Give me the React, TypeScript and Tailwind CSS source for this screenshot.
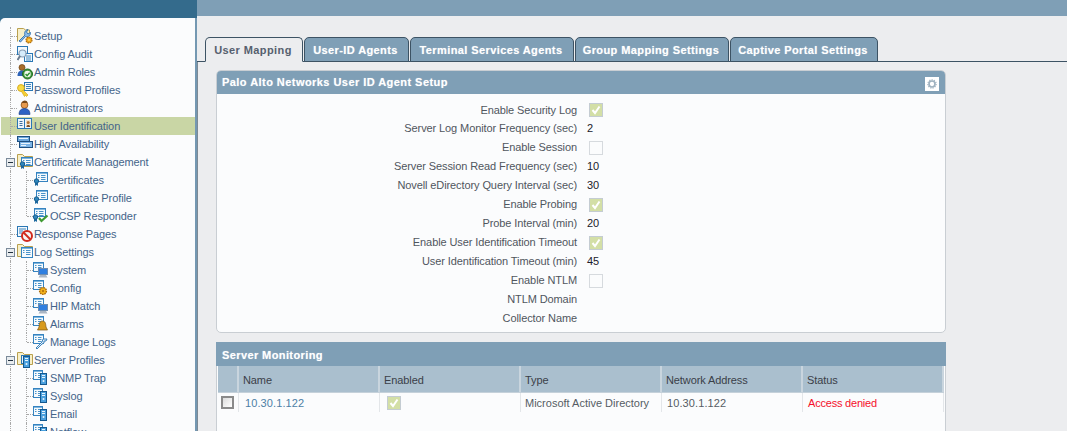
import React from "react";

const Doc = ({ x = 0, y = 0, w = 11, h = 10 }: any) => (
  <g>
    <rect x={x + 0.5} y={y + 0.5} width={w} height={h} fill="#f6fafd" stroke="#3583c0" />
    <rect x={x + 1} y={y + 1} width={w - 1} height={1} fill="#7fb6de" />
    <path d={`M${x + 5} ${y + 3.5}h${w - 6.5}M${x + 5} ${y + 5.5}h${w - 6.5}M${x + 5} ${y + 7.5}h${w - 6.5}M${x + 2} ${y + 3.5}h1.5M${x + 2} ${y + 5.5}h1.5`} stroke="#4a93c9" />
  </g>
);
const Folder = () => <path d="M0.5 0.5h5l2 2h8v10h-15z" fill="#f7efc8" stroke="#b9a04e" />;
const Ribbon = ({ x = 3, y = 11 }: any) => (
  <g>
    <path d={`M${x - 1.5} ${y}v5l1.5-1 1.5 1v-5z`} fill="#1f6aa0" />
    <circle cx={x} cy={y} r={2.2} fill="#2f86bb" stroke="#1b5f90" />
  </g>
);
const Server = ({ x = 6, y = 4 }: any) => (
  <g>
    <rect x={x + 0.5} y={y + 0.5} width={6} height={11} fill="#4aa0de" stroke="#14598f" />
    <rect x={x + 2} y={y + 2} width={3} height={1} fill="#e8f4fc" />
    <rect x={x + 2} y={y + 4} width={3} height={1} fill="#e8f4fc" />
    <circle cx={x + 3.5} cy={y + 8} r={1} fill="#e8f4fc" />
  </g>
);
const Monitor = () => (
  <g>
    <rect x="5.5" y="6.5" width="9" height="6" fill="#2f7fe0" stroke="#6d8db0" />
    <path d="M7 13h6l1.5 2.5h-9z" fill="#aab6c4" />
  </g>
);

const icons: Record<string, React.ReactNode> = {
  setup: (
    <>
      <path d="M0.5 13.5v-13h6l2 1.5h4v3" fill="#f7efc8" stroke="#b9a04e" />
      <path d="M2 13l6-6c-1-2 0-5 3-5.5l-1.5 2.5 1.5 2 2.5-1.5c.3 3-2.5 5-5 4l-5 5.5z" fill="#8dbcea" stroke="#2d6fae" strokeWidth="0.9" />
      <circle cx="12" cy="12" r="3" fill="#f0a81c" stroke="#a8690d" strokeWidth="1.2" strokeDasharray="1.6 0.7" />
      <circle cx="12" cy="12" r="1" fill="#f9d776" />
    </>
  ),
  audit: (
    <>
      <rect x="0.5" y="0.5" width="10" height="8" fill="#f2f8fd" stroke="#2a77b4" />
      <rect x="7.5" y="7.5" width="8" height="8" fill="#f2f8fd" stroke="#2a77b4" />
      <path d="M9 10h5M9 12h5M9 14h5" stroke="#3f86bd" />
      <circle cx="5.5" cy="7.5" r="3.5" fill="#d6ecfb" stroke="#8a9fb5" strokeWidth="1.2" />
      <path d="M3 10l-2.5 4" stroke="#6b7c8e" strokeWidth="2" />
    </>
  ),
  roles: (
    <>
      <circle cx="5" cy="3.5" r="3" fill="#a86d2a" stroke="#6d4212" strokeWidth="0.7" />
      <path d="M0.5 12c0-4 2-5.5 4.5-5.5 2 0 3 1 3.5 3v2.5z" fill="#2d63b8" />
      <circle cx="10.5" cy="10" r="5" fill="#3f9a3c" stroke="#1f6620" />
      <circle cx="10.5" cy="10" r="3.2" fill="#f2f7ee" />
      <path d="M8.6 10l1.5 1.7 2.6-3" stroke="#2b8f2f" strokeWidth="1.4" fill="none" />
    </>
  ),
  key: (
    <>
      <rect x="7.5" y="0.5" width="8" height="8" fill="#f2f8fd" stroke="#2a77b4" />
      <path d="M9 2.5h5M9 4.5h5M9 6.5h5" stroke="#3f86bd" />
      <circle cx="4" cy="6" r="3.4" fill="#f7db45" stroke="#d6ab20" />
      <path d="M6 8l5 5-1.5 1.5-1-1-1 1-3-5z" fill="#f4cf35" stroke="#d6ab20" strokeWidth="0.7" />
    </>
  ),
  admin: (
    <>
      <circle cx="7.5" cy="5" r="3.4" fill="#e79a4e" stroke="#8a4f16" strokeWidth="0.8" />
      <path d="M4.5 3c1-3 5.5-3.5 6 0z" fill="#7a4a1a" />
      <path d="M2 14.5c0-4 2-6 5.5-6s5.5 2 5.5 6z" fill="#2c62c4" stroke="#1c3f86" strokeWidth="0.6" />
    </>
  ),
  userid: (
    <>
      <rect x="0.5" y="0.5" width="14" height="10" fill="#eef5fb" stroke="#2a77b4" />
      <path d="M7.5 1v9" stroke="#2a77b4" />
      <path d="M2.5 3.5h3M2.5 5.5h3M2.5 7.5h3" stroke="#3f6f9e" />
      <rect x="9" y="2" width="4.5" height="7" fill="#efe0c8" />
      <circle cx="11.2" cy="4.5" r="1.5" fill="#b0753a" />
      <path d="M9.5 9c0-2.6 3.6-2.6 3.6 0z" fill="#7c4d24" />
    </>
  ),
  ha: (
    <>
      <rect x="0.5" y="0.5" width="12" height="5" fill="#6ba7dd" stroke="#1d4f80" />
      <rect x="2.5" y="5.5" width="13" height="6" fill="#7cb4e6" stroke="#1d4f80" />
      <path d="M4 7.5h9M4 9.5h5" stroke="#e9f4fd" />
      <path d="M2 2.5h9" stroke="#e9f4fd" />
    </>
  ),
  certFolder: (
    <>
      <Folder />
      <g transform="translate(4,3)">
        <Doc w={11} h={8} />
        <Ribbon x={1.5} y={7} />
      </g>
    </>
  ),
  cert: (
    <>
      <g transform="translate(3,0)">
        <Doc w={11} h={9} />
      </g>
      <Ribbon x={3.5} y={9} />
    </>
  ),
  ocsp: (
    <>
      <g transform="translate(1,0)">
        <Doc w={11} h={8} />
      </g>
      <Ribbon x={2.5} y={9} />
      <path d="M6 10l2.5 3 6-5.5" stroke="#3f9a32" strokeWidth="2.2" fill="none" />
    </>
  ),
  response: (
    <>
      <rect x="0.5" y="0.5" width="10" height="10" fill="#f2f8fd" stroke="#2a77b4" />
      <path d="M2 3h7M2 5h4M2 7h3" stroke="#3f86bd" />
      <circle cx="10" cy="10" r="5" fill="#f6f6f6" stroke="#d12b1e" strokeWidth="2" />
      <path d="M6.5 6.5l7 7" stroke="#d12b1e" strokeWidth="2" />
    </>
  ),
  logFolder: (
    <>
      <Folder />
      <g transform="translate(4,3)">
        <Doc w={11} h={10} />
      </g>
    </>
  ),
  system: (
    <>
      <Doc w={10} h={9} />
      <Monitor />
    </>
  ),
  config: (
    <>
      <Doc w={10} h={9} />
      <circle cx="10" cy="11" r="3.4" fill="#f2b21d" stroke="#a8690d" strokeWidth="1.4" strokeDasharray="1.5 0.8" />
      <circle cx="10" cy="11" r="1" fill="#a8690d" />
    </>
  ),
  alarm: (
    <>
      <Doc w={10} h={9} />
      <path d="M9.5 5c3 0 3.2 3 3.5 6l1.5 3h-10l1.5-3c.3-3 .5-6 3.5-6z" fill="#d89a1c" stroke="#7d5510" strokeWidth="0.7" />
    </>
  ),
  manage: (
    <>
      <Doc w={10} h={9} />
      <path d="M3 14l6-6 1-3 4 0-1 2-2 0 0 2-2 1-5 5z" fill="#e6f1fa" stroke="#2a77b4" strokeWidth="0.9" />
    </>
  ),
  serverFolder: (
    <>
      <Folder />
      <rect x="4.5" y="3.5" width="8" height="8" fill="#e6f1fa" stroke="#2a77b4" />
      <Server x={6} y={4} />
    </>
  ),
  server: (
    <>
      <Doc w={9} h={9} />
      <Server x={7} y={3} />
    </>
  ),
};

type Row = { label: string; icon: string; level: 0 | 1; exp?: boolean; sel?: boolean; last?: boolean };
const rows: Row[] = [
  { label: "Setup", icon: "setup", level: 0 },
  { label: "Config Audit", icon: "audit", level: 0 },
  { label: "Admin Roles", icon: "roles", level: 0 },
  { label: "Password Profiles", icon: "key", level: 0 },
  { label: "Administrators", icon: "admin", level: 0 },
  { label: "User Identification", icon: "userid", level: 0, sel: true },
  { label: "High Availability", icon: "ha", level: 0 },
  { label: "Certificate Management", icon: "certFolder", level: 0, exp: true },
  { label: "Certificates", icon: "cert", level: 1 },
  { label: "Certificate Profile", icon: "cert", level: 1 },
  { label: "OCSP Responder", icon: "ocsp", level: 1, last: true },
  { label: "Response Pages", icon: "response", level: 0 },
  { label: "Log Settings", icon: "logFolder", level: 0, exp: true },
  { label: "System", icon: "system", level: 1 },
  { label: "Config", icon: "config", level: 1 },
  { label: "HIP Match", icon: "system", level: 1 },
  { label: "Alarms", icon: "alarm", level: 1 },
  { label: "Manage Logs", icon: "manage", level: 1, last: true },
  { label: "Server Profiles", icon: "serverFolder", level: 0, exp: true },
  { label: "SNMP Trap", icon: "server", level: 1 },
  { label: "Syslog", icon: "server", level: 1 },
  { label: "Email", icon: "server", level: 1 },
  { label: "Netflow", icon: "server", level: 1 },
];

const Check = ({ on }: { on: boolean }) => (
  <span className={`flex h-[14px] w-[14px] items-center justify-center border ${on ? "border-[#c4ccd2] bg-[#d3dfa6]" : "border-[#d6dade] bg-[#fbfcfd]"}`}>
    {on && (
      <svg width="12" height="12" viewBox="0 0 12 12">
        <path d="M2.5 6l2.5 3 4.5-6.5" stroke="#ffffff" strokeWidth="2" fill="none" />
      </svg>
    )}
  </span>
);

const TreeRow = ({ r }: { r: Row }) => (
  <div className={`relative flex h-[18px] items-center ${r.sel ? "bg-[#c9d6a5]" : ""} ${r.level === 0 ? "pl-[16px]" : "pl-[32px]"}`}>
    <span className="absolute left-[9px] top-0 h-[18px] border-l border-dotted border-[#a8a8a8]" />
    {r.level === 1 && (
      <>
        <span className={`absolute left-[25px] top-0 border-l border-dotted border-[#a8a8a8] ${r.last ? "h-[9px]" : "h-[18px]"}`} />
        <span className="absolute left-[26px] top-[9px] w-[6px] border-t border-dotted border-[#a8a8a8]" />
      </>
    )}
    {r.level === 0 && !r.exp && <span className="absolute left-[10px] top-[9px] w-[6px] border-t border-dotted border-[#a8a8a8]" />}
    {r.exp && (
      <span className="absolute left-[5px] top-[5px] flex h-[9px] w-[9px] items-center justify-center border border-[#7a8a9a] bg-[#e8ecef]">
        <span className="h-px w-[5px] bg-[#20303f]" />
      </span>
    )}
    <svg width="16" height="16" viewBox="0 0 16 16" className="shrink-0">
      {icons[r.icon]}
    </svg>
    <span className="ml-px whitespace-nowrap text-[11px] leading-none tracking-[-0.1px] text-[#44648a]">{r.label}</span>
  </div>
);

const tabs = [
  { label: "User Mapping", w: "w-[98px]", active: true },
  { label: "User-ID Agents", w: "w-[105px]" },
  { label: "Terminal Services Agents", w: "w-[164px]" },
  { label: "Group Mapping Settings", w: "w-[154px]" },
  { label: "Captive Portal Settings", w: "w-[148px]" },
];

const form: { l: string; v?: string; c?: boolean; h?: string }[] = [
  { l: "Enable Security Log", c: true, h: "h-[18px]" },
  { l: "Server Log Monitor Frequency (sec)", v: "2" },
  { l: "Enable Session", c: false },
  { l: "Server Session Read Frequency (sec)", v: "10" },
  { l: "Novell eDirectory Query Interval (sec)", v: "30" },
  { l: "Enable Probing", c: true },
  { l: "Probe Interval (min)", v: "20" },
  { l: "Enable User Identification Timeout", c: true },
  { l: "User Identification Timeout (min)", v: "45" },
  { l: "Enable NTLM", c: false },
  { l: "NTLM Domain", v: "" },
  { l: "Collector Name", v: "" },
];

const cols = [
  { w: "w-[21px]", t: "" },
  { w: "w-[141px]", t: "Name" },
  { w: "w-[141px]", t: "Enabled" },
  { w: "w-[141px]", t: "Type" },
  { w: "w-[141px]", t: "Network Address" },
  { w: "w-[141px]", t: "Status" },
];

export default function App() {
  return (
    <div className="h-[433px] w-[1067px] bg-white">
      <div
        className="flex h-[431px] w-[1067px] overflow-hidden bg-[#ecedef] text-[11px] tracking-[-0.1px] text-[#4a5058]"
        style={{ fontFamily: '"Liberation Sans", Arial, sans-serif' }}
      >
        <aside className="flex h-full w-[197px] shrink-0 flex-col bg-[#346b8c]">
          <div className="h-[18px] shrink-0" />
          <div className="flex-1 overflow-hidden rounded-tl-[5px] border-r-2 border-[#7498b2] bg-[#fbfcfd] pl-px pt-[9px]">
            {rows.map((r) => (
              <TreeRow key={r.label + r.icon + r.level} r={r} />
            ))}
          </div>
        </aside>
        <main className="flex min-w-0 flex-1 flex-col">
          <div className="h-[16px] shrink-0 bg-[#7f9fb6]" />
          <div className="flex h-[46px] shrink-0 items-end border-b border-[#3d5364] pl-[8px] pt-[21px]">
            {tabs.map((t) => (
              <div
                key={t.label}
                className={`-mb-px flex h-[25px] items-center justify-center rounded-t-[5px] border border-[#3d5364] pr-[2px] pt-px font-bold tracking-[0.4px] ${t.w} ${
                  t.active
                    ? "border-b-[#ecedef] bg-[#ecedef] text-[#56606e]"
                    : "ml-px bg-[#7f9fb6] text-white [text-shadow:0_0_1px_rgba(255,255,255,0.5)]"
                }`}
              >
                {t.label}
              </div>
            ))}
          </div>
          <div className="flex flex-1 flex-col border-l border-[#7d8a95] pl-[18px] pt-[8px]">
            <section className="h-[263px] w-[730px] shrink-0 overflow-hidden rounded-[5px] border border-[#c9ced3] bg-[#fbfcfd]">
              <div className="-mx-px -mt-px flex h-[24px] items-center justify-between rounded-t-[5px] bg-[#7f9fb6] pl-[6px] pr-[7px]">
                <span className="pt-px font-bold tracking-[0.45px] text-white [text-shadow:0_0_1px_rgba(255,255,255,0.5)]">
                  Palo Alto Networks User ID Agent Setup
                </span>
                <span className="mt-[3px] flex h-[14px] w-[14px] items-center justify-center bg-white">
                  <svg width="10" height="10" viewBox="0 0 12 12">
                    <circle cx="6" cy="6" r="3.6" fill="none" stroke="#9fb2c0" strokeWidth="2" />
                    <circle cx="6" cy="6" r="5" fill="none" stroke="#9fb2c0" strokeWidth="1.4" strokeDasharray="1.4 1.4" />
                  </svg>
                </span>
              </div>
              <div className="pt-[7px]">
                {form.map((f) => (
                  <div key={f.l} className={`flex items-center ${f.h ?? "h-[19px]"}`}>
                    <span className="w-[360px] text-right leading-none text-[#50565e]">{f.l}</span>
                    <span className="ml-[10px] flex items-center text-[#20202a]">
                      {f.c !== undefined ? <span className="ml-[2px]"><Check on={f.c} /></span> : f.v}
                    </span>
                  </div>
                ))}
              </div>
            </section>
            <section className="mt-[9px] flex min-h-0 w-[730px] flex-1 flex-col border-x border-[#c9ced3] bg-[#fbfcfd]">
              <div className="-mx-px flex h-[24px] shrink-0 items-center bg-[#7f9fb6] pl-[6px]">
                <span className="pt-[2px] font-bold tracking-[0.4px] text-white [text-shadow:0_0_1px_rgba(255,255,255,0.5)]">
                  Server Monitoring
                </span>
              </div>
              <div className="ml-px flex h-[27px] w-[726px] shrink-0 border-b border-[#c5d1da] bg-[#aabfce]">
                {cols.map((c) => (
                  <div key={c.t} className={`flex items-center border-r-2 border-[#c9d5de] pl-[4px] pt-[3px] text-[#3a4048] ${c.w}`}>
                    {c.t}
                  </div>
                ))}
              </div>
              <div className="ml-px flex h-[19px] w-[726px] shrink-0">
                <div className="flex w-[21px] items-center justify-center border-r border-[#e3e6e9] pr-px">
                  <span className="block h-[13px] w-[13px] border-2 border-[#8a8a8a] bg-gradient-to-br from-[#dcdcdc] to-white" />
                </div>
                <div className="flex w-[141px] items-center border-r border-[#e3e6e9] pl-[6px] pt-[2px] tracking-[0.1px] text-[#4d7fa6]">10.30.1.122</div>
                <div className="flex w-[141px] items-center border-r border-[#e3e6e9] pl-[7px]">
                  <Check on />
                </div>
                <div className="flex w-[141px] items-center border-r border-[#e3e6e9] pl-[4px] pt-[2px] tracking-normal text-[#565c64]">Microsoft Active Directory</div>
                <div className="flex w-[141px] items-center border-r border-[#e3e6e9] pl-[5px] pt-[2px] tracking-[0.1px] text-[#565c64]">10.30.1.122</div>
                <div className="flex w-[141px] items-center border-r border-[#e3e6e9] pl-[5px] pt-[2px] tracking-[-0.2px] text-[#f5102c]">Access denied</div>
              </div>
            </section>
          </div>
        </main>
      </div>
    </div>
  );
}
